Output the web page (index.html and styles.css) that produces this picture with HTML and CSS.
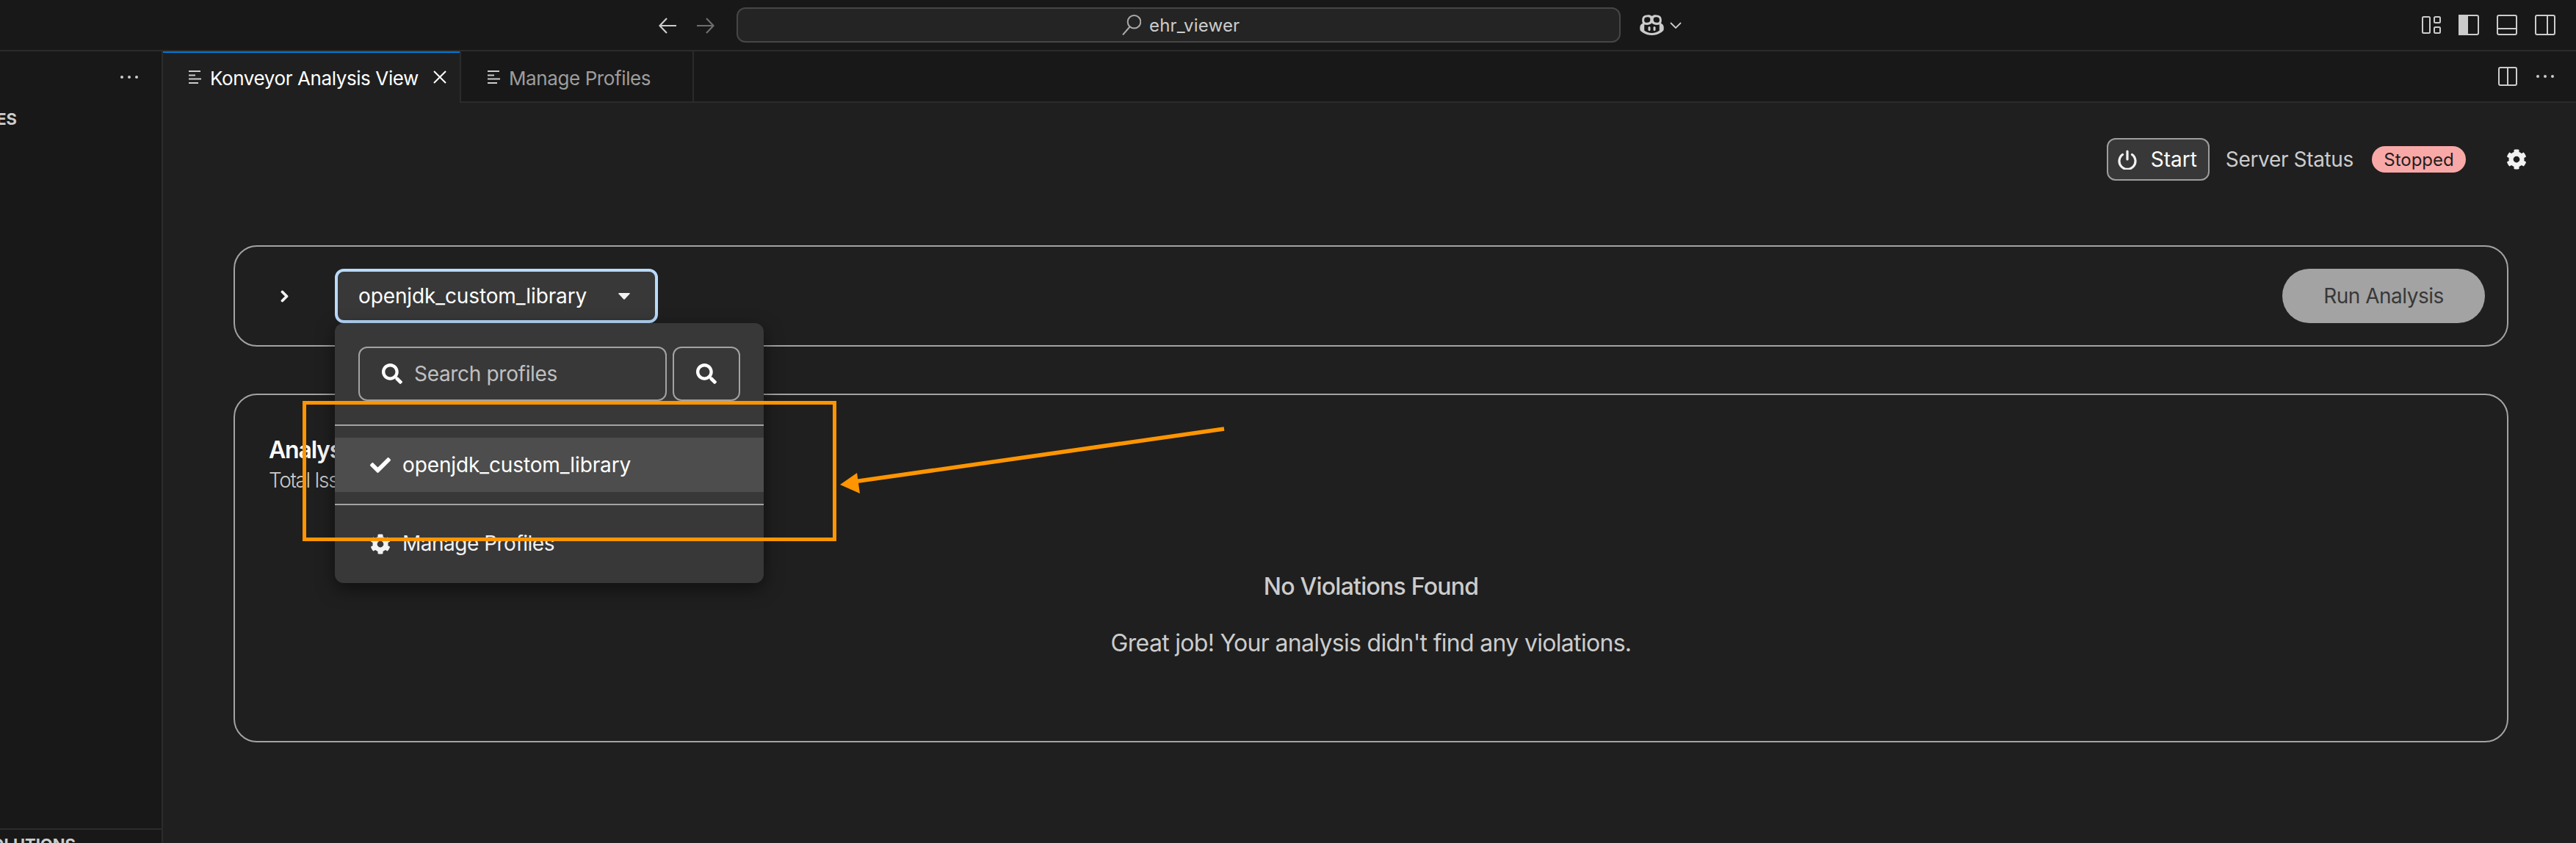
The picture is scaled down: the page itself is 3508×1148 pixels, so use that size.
FILE: index.html
```html
<!DOCTYPE html>
<html lang="en">
<head>
<meta charset="utf-8">
<title>ehr_viewer</title>
<link rel="stylesheet" href="styles.css">
</head>
<body>
<svg class="defs" width="0" height="0">
  <symbol id="gear" viewBox="0 0 512 512"><path d="M487.4 315.7l-42.6-24.6c4.3-23.2 4.3-47 0-70.2l42.6-24.6c4.9-2.8 7.1-8.6 5.5-14-11.1-35.6-30-67.8-54.7-94.6-3.8-4.1-10-5.1-14.8-2.3L380.8 110c-17.9-15.4-38.5-27.3-60.8-35.1V25.8c0-5.6-3.9-10.5-9.4-11.7-36.7-8.2-74.3-7.8-109.2 0-5.5 1.2-9.4 6.1-9.4 11.7V75c-22.2 7.9-42.8 19.8-60.8 35.1L88.7 85.5c-4.9-2.8-11-1.9-14.8 2.3-24.7 26.7-43.6 58.9-54.7 94.6-1.7 5.4.6 11.2 5.5 14L67.3 221c-4.3 23.2-4.3 47 0 70.2l-42.6 24.6c-4.9 2.8-7.1 8.6-5.5 14 11.1 35.6 30 67.8 54.7 94.6 3.8 4.1 10 5.1 14.8 2.3l42.6-24.6c17.9 15.4 38.5 27.3 60.8 35.1v49.2c0 5.6 3.9 10.5 9.4 11.7 36.7 8.2 74.3 7.8 109.2 0 5.5-1.2 9.4-6.1 9.4-11.7v-49.2c22.2-7.9 42.8-19.8 60.8-35.1l42.6 24.6c4.9 2.8 11 1.9 14.8-2.3 24.7-26.7 43.6-58.9 54.7-94.6 1.5-5.5-.7-11.3-5.6-14.1zM256 336c-44.1 0-80-35.9-80-80s35.9-80 80-80 80 35.9 80 80-35.9 80-80 80z"/></symbol>
  <symbol id="search" viewBox="0 0 512 512"><path d="M505 442.700L405.300 343c-4.500-4.500-10.600-7-17-7H372c27.600-35.300 44-79.700 44-128C416 93.100 322.900 0 208 0S0 93.100 0 208s93.100 208 208 208c48.300 0 92.700-16.400 128-44v16.300c0 6.400 2.500 12.500 7 17l99.700 99.700c9.400 9.400 24.600 9.400 33.900 0l28.300-28.300c9.400-9.400 9.400-24.600.1-34zM208 336c-70.700 0-128-57.200-128-128 0-70.700 57.200-128 128-128 70.700 0 128 57.200 128 128 0 70.700-57.200 128-128 128z"/></symbol>
  <symbol id="lines" viewBox="0 0 17 18"><path d="M0 0h16v2H0zM0 5.500h9v2H0zM0 10.500h17v2H0zM0 16h13v2H0z"/></symbol>
  <symbol id="dots" viewBox="0 0 24 6"><circle cx="2" cy="3" r="2"/><circle cx="12" cy="3" r="2"/><circle cx="22" cy="3" r="2"/></symbol>
</svg>

<header class="titlebar">
  <div class="nav">
    <svg class="arrow" viewBox="0 0 24 22"><path d="M11 1L1.500 11l9.500 10M1.500 11H24"/></svg>
    <svg class="arrow arrow-off" viewBox="0 0 24 22"><path d="M13 1l9.500 10L13 21M22.500 11H0"/></svg>
  </div>
  <div class="command">
    <svg class="command-icon" viewBox="0 0 26 28"><circle cx="16.500" cy="9.800" r="8.800"/><path d="M10.500 16.500L1 27.500"/></svg>
    <span class="t-cmd">ehr_viewer</span>
  </div>
  <div class="copilot">
    <svg class="copilot-icon" viewBox="0 0 33 28"><path fill-rule="evenodd" d="M16.500 2C14.500 0 11 0 8 .8 4.500 1.600 3.200 4 3.200 7.500c0 1.700.2 3 .8 4.200C1.500 13 .3 14.700.3 17v3c0 2.800 7.700 8 16.200 8s16.200-5.200 16.200-8v-3c0-2.300-1.200-4-3.700-5.300.6-1.200.8-2.500.8-4.200 0-3.500-1.300-5.900-4.800-6.700-3-.8-6.500-.8-8.500 1.200zM8.700 3.500c-2 .4-2.600 1.600-2.600 4 0 2.500 1 3.300 3.600 3.300 3.300 0 4.700-1.500 4.700-4.300 0-2.700-2-3.700-5.700-3zm15.600 0c2 .4 2.600 1.600 2.600 4 0 2.500-1 3.300-3.600 3.300-3.300 0-4.700-1.500-4.700-4.300 0-2.700 2-3.700 5.700-3zM6.200 13.600v8c2.800 2 6.300 3.400 10.300 3.400s7.500-1.400 10.300-3.400v-8c-4.500 1-8.300.2-10.300-2.300-2 2.500-5.800 3.300-10.300 2.300z"/><rect x="11.500" y="16" width="3" height="6" rx="1.500"/><rect x="18.500" y="16" width="3" height="6" rx="1.500"/></svg>
    <svg class="chev-down" viewBox="0 0 16 9"><path d="M1 1l7 7 7-7"/></svg>
  </div>
  <div class="layout-icons">
    <svg width="26" height="24" viewBox="0 0 26 24"><rect x="1" y="1" width="10" height="22" rx="1.500"/><rect x="17" y="1" width="8" height="8" rx="1.500"/><rect x="17" y="15" width="8" height="8" rx="1.500"/></svg>
    <svg width="28" height="28" viewBox="0 0 28 28"><rect x="1" y="1" width="26" height="26" rx="2"/><path class="solid" d="M1 1h11v26H1z"/></svg>
    <svg width="28" height="28" viewBox="0 0 28 28"><rect x="1" y="1" width="26" height="26" rx="2"/><path d="M1 19h26"/></svg>
    <svg width="28" height="28" viewBox="0 0 28 28"><rect x="1" y="1" width="26" height="26" rx="2"/><path d="M17 1v26"/></svg>
  </div>
</header>

<div class="workbench">
  <aside class="sidebar">
    <div class="sidebar-top"><svg class="dots"><use href="#dots"/></svg></div>
    <div class="section-name"><span class="t-side">ES</span></div>
    <div class="section-bottom"><span class="t-side">SOLUTIONS</span></div>
  </aside>

  <main class="editor">
    <div class="tabs">
      <div class="tab tab-active">
        <svg class="lines"><use href="#lines"/></svg>
        <span class="t-tab1">Konveyor Analysis View</span>
        <svg class="close" viewBox="0 0 18 18"><path d="M1 1l16 16M17 1L1 17"/></svg>
      </div>
      <div class="tab tab-idle">
        <svg class="lines"><use href="#lines"/></svg>
        <span class="t-tab2">Manage Profiles</span>
      </div>
      <div class="tab-actions">
        <svg width="26" height="26" viewBox="0 0 26 26"><rect x="1" y="1" width="24" height="24" rx="2"/><path d="M13 1v24"/></svg>
        <svg class="dots"><use href="#dots"/></svg>
      </div>
    </div>

    <div class="view">
      <div class="server">
        <button class="start">
          <svg class="power" viewBox="0 0 26 27"><path d="M6.500 6.500a11 11 0 1 0 13 0M13 2v11"/></svg>
          <span class="t-start">Start</span>
        </button>
        <span class="t-status">Server Status</span>
        <span class="badge"><span class="t-badge">Stopped</span></span>
        <svg class="gear gear-top"><use href="#gear"/></svg>
      </div>

      <section class="card toolbar">
        <svg class="expand" viewBox="0 0 12 17"><path d="M2.500 2.500l6 6-6 6"/></svg>
        <div class="picker">
          <button class="toggle">
            <span class="t-toggle">openjdk_custom_library</span>
            <svg class="caret" viewBox="0 0 16 9"><path d="M1 0h14q1.500 0 .5 1.200L9 8.300q-1 1-2 0L.5 1.200Q-.5 0 1 0z"/></svg>
          </button>
          <div class="menu">
            <div class="search-row">
              <div class="search-input">
                <svg class="mag"><use href="#search"/></svg>
                <span class="t-search">Search profiles</span>
              </div>
              <button class="search-btn"><svg class="mag"><use href="#search"/></svg></button>
            </div>
            <div class="item item-selected">
              <svg class="check" viewBox="0 64 512 384"><path d="M173.900 439.400l-166.400-166.400c-10-10-10-26.200 0-36.200l36.200-36.200c10-10 26.200-10 36.200 0L192 312.700 432.100 72.600c10-10 26.200-10 36.200 0l36.200 36.200c10 10 10 26.200 0 36.200l-294.400 294.400c-10 10-26.200 10-36.200 0z"/></svg>
              <span class="t-item">openjdk_custom_library</span>
            </div>
            <div class="item item-manage">
              <svg class="gear"><use href="#gear"/></svg>
              <span class="t-manage">Manage Profiles</span>
            </div>
          </div>
        </div>
        <button class="run"><span class="t-run">Run Analysis</span></button>
      </section>

      <section class="card results">
        <h2 class="t-title">Analysis Results</h2>
        <p class="t-total">Total Issues: 0</p>
        <div class="empty">
          <h3 class="t-empty">No Violations Found</h3>
          <p class="t-great">Great job! Your analysis didn't find any violations.</p>
        </div>
      </section>
    </div>
  </main>
</div>

<div class="callout"></div>
<svg class="callout-arrow" viewBox="0 0 530 90"><path class="shaft" d="M523 12L22 83.500"/><path d="M0 88L23 72l4 28z"/></svg>
</body>
</html>
```
FILE: styles.css
```css
* { box-sizing: border-box; }
body {
  margin: 0;
  width: 3508px;
  height: 1148px;
  overflow: hidden;
  position: relative;
  display: flex;
  flex-direction: column;
  background: #1f1f1f;
  color: #ccc;
  font-family: Inter, "Liberation Sans", sans-serif;
  font-size: 28px;
}
button { font: inherit; color: #fff; padding: 0; border: 0; }
h2, h3, p { margin: 0; font-weight: 400; }
svg { display: block; flex: none; fill: #ccc; }
span { white-space: nowrap; flex: none; }
.defs { position: absolute; }

.titlebar {
  height: 70px;
  flex: none;
  display: flex;
  align-items: center;
  background: #181818;
  border-bottom: 2px solid #2b2b2b;
}
.nav { display: flex; gap: 28px; margin-left: 897px; width: 106px; }
.arrow { width: 24px; height: 22px; fill: none; stroke: #ccc; stroke-width: 2.200; margin-top: 1px; }
.arrow-off { stroke: #6e6e6e; }
.command {
  width: 1204px;
  height: 48px;
  display: flex;
  padding-left: 523px;
  gap: 11px;
  align-items: center;
  background: #242424;
  border: 2px solid #464646;
  border-radius: 12px;
}
.command-icon { width: 26px; height: 28px; fill: none; stroke: #aaa; stroke-width: 2; }
.copilot { display: flex; align-items: center; gap: 8px; margin-left: 26px; }
.copilot-icon { width: 33px; height: 28px; }
.chev-down { width: 16px; height: 9px; fill: none; stroke: #ccc; stroke-width: 1.800; }
.layout-icons { display: flex; gap: 24px; align-items: center; margin-left: auto; margin-right: 28px; }
.layout-icons svg, .tab-actions svg:first-child { fill: none; stroke: #ccc; stroke-width: 2; }
.layout-icons .solid { fill: #ccc; }

.workbench { flex: 1; display: flex; min-height: 0; }
.sidebar {
  width: 222px;
  flex: none;
  display: flex;
  flex-direction: column;
  background: #181818;
  border-right: 2px solid #2b2b2b;
  overflow: hidden;
}
.sidebar-top { height: 70px; display: flex; align-items: center; justify-content: flex-end; padding-right: 32px; }
.dots { width: 24px; height: 6px; }
.section-name { height: 44px; display: flex; align-items: center; padding-right: 197px; justify-content: flex-end; }
.section-bottom {
  margin-top: auto;
  height: 20px;
  border-top: 2px solid #2b2b2b;
  display: flex;
  justify-content: flex-end;
  padding: 7px 117px 0 0;
}

.editor { flex: 1; min-width: 0; display: flex; flex-direction: column; }
.tabs { height: 70px; flex: none; display: flex; background: #181818; }
.tab { display: flex; align-items: center; height: 70px; padding-top: 2px; border-right: 2px solid #2b2b2b; }
.tab-active { width: 406px; padding-left: 35px; background: #1f1f1f; box-shadow: inset 0 2px #0078d4; color: #fff; }
.tab-idle { width: 317px; padding-left: 36px; border-bottom: 2px solid #2b2b2b; color: #9d9d9d; padding-top: 4px; }
.lines { width: 17px; height: 18px; margin-right: 12px; margin-top: -2px; }
.close { width: 18px; height: 18px; margin-left: 20px; margin-top: -2px; fill: none; stroke: #fff; stroke-width: 2; }
.tab-actions {
  flex: 1;
  display: flex;
  align-items: center;
  justify-content: flex-end;
  gap: 26px;
  padding-right: 30px;
  border-bottom: 2px solid #2b2b2b;
}

.view { flex: 1; padding: 48px 92px 0 96px; }
.server { height: 58px; display: flex; align-items: center; justify-content: flex-end; }
.start {
  width: 140px;
  height: 58px;
  display: flex;
  align-items: center;
  padding-left: 13px;
  gap: 19px;
  background: #383838;
  border: 2px solid #9d9d9d;
  border-radius: 12px;
  margin-right: 22px;
}
.power { width: 26px; height: 27px; fill: none; stroke: #f2f2f2; stroke-width: 3.200; stroke-linecap: round; }
.badge {
  width: 128px;
  height: 36px;
  margin: 0 55px 0 25px;
  display: flex;
  align-items: center;
  justify-content: center;
  background: #f9a8a8;
  color: #1f1f1f;
  border-radius: 18px;
}
.gear { width: 28px; height: 28px; fill: #f2f2f2; }
.gear-top { margin-right: -25px; }

.card { border: 2px solid #a3a3a3; border-radius: 32px; }
.toolbar { height: 138px; margin-top: 88px; display: flex; align-items: center; padding: 0 30px 0 62px; }
.expand { width: 12px; height: 17px; fill: none; stroke: #f2f2f2; stroke-width: 3.800; stroke-linecap: round; stroke-linejoin: round; }
.picker { position: relative; margin-left: 62px; }
.toggle {
  width: 440px;
  height: 74px;
  display: flex;
  align-items: center;
  padding: 0 34px 0 28px;
  justify-content: space-between;
  background: #383838;
  border: 4px solid #b9dafc;
  border-radius: 12px;
}
.caret { width: 16px; height: 9px; fill: #f2f2f2; }
.run {
  width: 276px;
  height: 74px;
  margin-left: auto;
  background: #a3a3a3;
  color: #383838;
  border-radius: 37px;
}

.menu {
  position: absolute;
  left: 0;
  top: 74px;
  z-index: 2;
  width: 584px;
  height: 354px;
  background: #383838;
  border-radius: 12px;
  box-shadow: 0 8px 24px rgba(0, 0, 0, .5);
}
.search-row { display: flex; gap: 8px; height: 140px; padding: 32px; border-bottom: 2px solid #a3a3a3; }
.search-input, .search-btn {
  height: 74px;
  display: flex;
  align-items: center;
  background: #383838;
  border: 2px solid #a3a3a3;
  border-radius: 12px;
}
.search-input { width: 420px; padding-left: 30px; gap: 16px; }
.search-btn { width: 92px; justify-content: center; }
.mag { width: 28px; height: 28px; fill: #fff; }
.item { display: flex; align-items: center; height: 74px; padding-left: 48px; gap: 16px; color: #fff; }
.item-selected { margin-top: 16px; background: #4d4d4d; }
.item-manage { height: 108px; margin-top: 16px; border-top: 2px solid #a3a3a3; color: #f2f2f2; align-items: flex-start; padding-top: 39px; }
.check { width: 28px; height: 21px; fill: #fff; }

.results { height: 475px; margin-top: 64px; padding: 55px 0 0 46px; }
.empty { display: flex; flex-direction: column; align-items: center; margin-left: -46px; }

.t-side { font-size: 22px; font-weight: 700; line-height: 26px; }
.t-cmd { font-size: 24px; letter-spacing: .2px; }
.t-tab1, .t-tab2 { font-size: 26px; letter-spacing: -.4px; }
.t-status { letter-spacing: -.35px; }
.t-badge { font-size: 24px; }
.t-toggle, .t-item { letter-spacing: -.12px; }
.t-search { color: #c0c0c0; letter-spacing: -.32px; }
.t-manage { line-height: 34px; margin-top: -4px; letter-spacing: -.5px; }
.t-run { letter-spacing: -.5px; }
.t-title { font-size: 32px; font-weight: 600; line-height: 40px; letter-spacing: -1.2px; color: #fff; }
.t-total { font-size: 28px; font-weight: 300; line-height: 42px; letter-spacing: -1.4px; }
.t-empty { font-size: 32px; font-weight: 500; line-height: 40px; margin-top: 104px; letter-spacing: -.77px; }
.t-great { font-size: 32px; line-height: 40px; margin-top: 37px; letter-spacing: -.69px; }

.callout {
  position: absolute;
  left: 412px;
  top: 546px;
  width: 727px;
  height: 191px;
  border: 5px solid #ff9500;
  z-index: 3;
}
.callout-arrow { position: absolute; left: 1144px; top: 572px; width: 530px; height: 90px; overflow: visible; fill: #ff9500; z-index: 3; }
.shaft { stroke: #ff9500; stroke-width: 5.500; }
```
